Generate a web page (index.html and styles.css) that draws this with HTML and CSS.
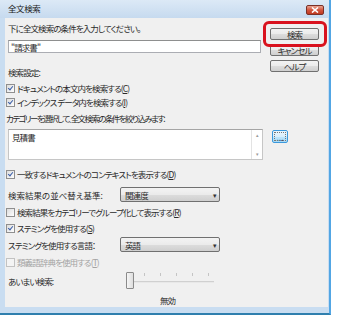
FILE: index.html
```html
<!DOCTYPE html>
<html lang="ja">
<head>
  <meta charset="UTF-8" />
  <title>全文検索</title>
  <link rel="stylesheet" href="styles.css">
</head>
<body>
  <div class="window">
    <div class="titlebar">
      <span class="title">全文検索</span>
      <span class="close-btn">
        <svg width="8" height="6" viewBox="0 0 8 6"><path d="M1 0.5 L7 5.5 M7 0.5 L1 5.5" stroke="#fff" stroke-width="1.6"/></svg>
      </span>
    </div>
    <div class="frame">
      <div class="client">
        <div class="top">
          <div class="top-main">
            <div class="line first">下に全文検索の条件を入力してください。</div>
            <div class="textbox">"請求書"</div>
            <div class="line label-settings">検索設定:</div>
            <div class="check first-check"><span class="box checked"></span>ドキュメントの本文内を検索する(<u>C</u>)</div>
            <div class="check tight"><span class="box checked"></span>インデックス データ内を検索する(<u>I</u>)</div>
            <div class="line label-category">カテゴリーを選択して、全文検索の条件を絞り込みます:</div>
          </div>
          <div class="top-side">
            <button class="btn">検索</button>
            <button class="btn">キャンセル</button>
            <button class="btn">ヘルプ</button>
          </div>
          <div class="highlight"></div>
        </div>

        <div class="list-row">
          <div class="listbox">
            <div class="list-item">見積書</div>
            <div class="scrollbar">
              <span class="arrow">&#9652;</span>
              <span class="arrow">&#9662;</span>
            </div>
          </div>
          <button class="btn dots">...</button>
        </div>

        <div class="check gap-context"><span class="box checked"></span>一致するドキュメントのコンテキストを表示する(<u>D</u>)</div>

        <div class="field-row sort-row">
          <span class="field-label">検索結果の並べ替え基準:</span>
          <div class="select"><span>関連度</span><span class="caret">&#9662;</span></div>
        </div>

        <div class="check gap-group"><span class="box"></span>検索結果をカテゴリーでグループ化して表示する(<u>R</u>)</div>
        <div class="check gap-stem"><span class="box checked"></span>ステミングを使用する(<u>S</u>)</div>

        <div class="field-row lang-row">
          <span class="field-label">ステミングを使用する言語：</span>
          <div class="select"><span>英語</span><span class="caret">&#9662;</span></div>
        </div>

        <div class="check disabled gap-thes"><span class="box"></span>類義語辞典を使用する(<u>T</u>)</div>

        <div class="field-row fuzzy-row">
          <span class="field-label">あいまい検索:</span>
          <div class="slider">
            <div class="ticks">
              <i></i><i></i><i></i><i></i><i></i>
            </div>
            <div class="track"></div>
            <div class="thumb"></div>
          </div>
        </div>
        <div class="slider-value">無効</div>
      </div>
    </div>
  </div>
</body>
</html>
```

FILE: styles.css
```css
body {
  margin: 0;
  background: #fff;
  font-family: "Noto Sans CJK JP", "Noto Sans", sans-serif;
  font-size: 8.5px;
  letter-spacing: -0.9px;
  font-feature-settings: "palt";
  color: #2a2a2a;
}
.window {
  width: 331px;
  height: 315px;
  display: flex;
  flex-direction: column;
  background: #c9ddf1;
  border-right: 2px solid #52a6e4;
  border-bottom: 2px solid #2f7fae;
  box-sizing: border-box;
}
.titlebar {
  height: 18px;
  display: flex;
  align-items: center;
  justify-content: space-between;
  padding: 0 5px 0 8px;
  background: linear-gradient(#dce9f6, #c6daef);
}
.title {
  line-height: 12px;
  margin-top: -2px;
  letter-spacing: -0.4px;
  color: #1a1a1a;
}
.close-btn {
  width: 18px;
  height: 10px;
  margin-top: 2px;
  display: flex;
  align-items: center;
  justify-content: center;
  border: 1px solid #7a3027;
  border-radius: 2px;
  background: linear-gradient(#e8a593, #d3543d 50%, #c0391f);
  box-sizing: border-box;
}
.frame {
  flex: 1;
  padding: 0 1px 6px 5px;
  display: flex;
}
.client {
  flex: 1;
  background: #f0f0f0;
  padding: 0 0 0 3px;
  display: flex;
  flex-direction: column;
}
.top {
  display: flex;
  position: relative;
}
.top-main {
  width: 253px;
  display: flex;
  flex-direction: column;
}
.line {
  height: 12px;
  line-height: 12px;
  white-space: nowrap;
}
.first {
  margin-top: 4px;
}
.textbox {
  margin-top: 6px;
  height: 13px;
  line-height: 12px;
  background: #fff;
  border: 1px solid #abadb3;
  border-top-color: #8e8f8f;
  box-sizing: border-box;
  padding-left: 2px;
}
.label-settings {
  margin-top: 13px;
}
.check {
  height: 12px;
  line-height: 12px;
  display: flex;
  align-items: center;
  white-space: nowrap;
  margin-left: -2px;
}
.first-check {
  margin-top: 4px;
}
.tight {
  margin-top: 2px;
}
.label-category {
  margin-top: 4px;
  margin-left: -2px;
  letter-spacing: -1.6px;
}
.box {
  width: 7px;
  height: 7px;
  border: 1px solid #8f8f8f;
  background: linear-gradient(135deg, #dcdcdc, #fff);
  margin-right: 2px;
  flex-shrink: 0;
  position: relative;
}
.box.checked::after {
  content: "";
  position: absolute;
  left: 2px;
  top: 0;
  width: 2px;
  height: 4px;
  border: solid #3b5ea8;
  border-width: 0 1.5px 1.5px 0;
  transform: rotate(40deg);
}
.disabled {
  color: #a3a3a3;
}
.disabled .box {
  border-color: #c2c2c2;
  background: #f4f4f4;
}
.top-side {
  display: flex;
  flex-direction: column;
  gap: 4px;
  margin: 10px 0 0 9px;
}
.btn {
  width: 49px;
  height: 12px;
  padding: 0;
  font-family: inherit;
  font-size: 8.5px;
  letter-spacing: -0.9px;
  font-feature-settings: "palt";
  line-height: 10px;
  color: #2a2a2a;
  border: 1px solid #707070;
  border-radius: 2px;
  background: linear-gradient(#f3f3f3, #ebebeb 50%, #dddddd 51%, #cfcfcf);
}
.highlight {
  position: absolute;
  left: 255px;
  top: 3px;
  width: 64px;
  height: 26px;
  border: 3px solid #d9121e;
  border-radius: 6px;
  box-sizing: border-box;
}
.list-row {
  display: flex;
  align-items: flex-start;
  margin-top: 5px;
}
.listbox {
  width: 255px;
  height: 31px;
  display: flex;
  justify-content: space-between;
  background: #fff;
  border: 1px solid #c6c6c6;
  border-top-color: #a5a5a5;
  box-sizing: border-box;
}
.list-item {
  padding: 2px 0 0 3px;
  line-height: 10px;
}
.scrollbar {
  width: 10px;
  border-left: 1px solid #e3e3e3;
  display: flex;
  flex-direction: column;
  justify-content: space-between;
  align-items: center;
  color: #9a9a9a;
  font-size: 5px;
  line-height: 10px;
}
.dots {
  width: 16px;
  height: 13px;
  margin: 1px 0 0 9px;
  line-height: 8px;
  letter-spacing: 0;
  border-color: #3c99dc;
  outline: 1px dotted #777;
  outline-offset: -3px;
  background: linear-gradient(#eaf6fd, #d9effc 50%, #bee6fd 51%, #a7d9f5);
}
.gap-context {
  margin-top: 8px;
}
.field-row {
  display: flex;
  align-items: center;
}
.field-label {
  width: 112px;
  white-space: nowrap;
}
.sort-row {
  margin-top: 7px;
}
.sort-row .field-label {
  letter-spacing: 0;
}
.select {
  width: 100px;
  height: 15px;
  display: flex;
  align-items: center;
  justify-content: space-between;
  padding: 0 3px 0 4px;
  box-sizing: border-box;
  border: 1px solid #707070;
  border-radius: 2px;
  background: linear-gradient(#f3f3f3, #ebebeb 50%, #dddddd 51%, #cfcfcf);
}
.caret {
  font-size: 7px;
  color: #333;
}
.gap-group {
  margin-top: 4px;
}
.gap-stem {
  margin-top: 4px;
}
.lang-row {
  margin-top: 3px;
}
.gap-thes {
  margin-top: 4px;
}
.fuzzy-row {
  margin-top: 4px;
  height: 18px;
}
.slider {
  position: relative;
  width: 92px;
  height: 18px;
  margin-left: 6px;
}
.ticks {
  display: flex;
  gap: 15px;
  margin-left: 18px;
  padding-top: 1px;
}
.ticks i {
  width: 1px;
  height: 3px;
  background: #c4c4c4;
}
.track {
  position: absolute;
  left: 1px;
  right: 4px;
  top: 9px;
  height: 1px;
  background: #d0d0d0;
  border-bottom: 1px solid #e8e8e8;
}
.thumb {
  position: absolute;
  left: 0;
  top: 0;
  width: 6px;
  height: 15px;
  border: 1px solid #8a8a8a;
  border-radius: 1px;
  background: linear-gradient(90deg, #f5f5f5, #dedede);
}
.slider-value {
  margin: 4px 0 0 152px;
  height: 12px;
  line-height: 12px;
}
```
